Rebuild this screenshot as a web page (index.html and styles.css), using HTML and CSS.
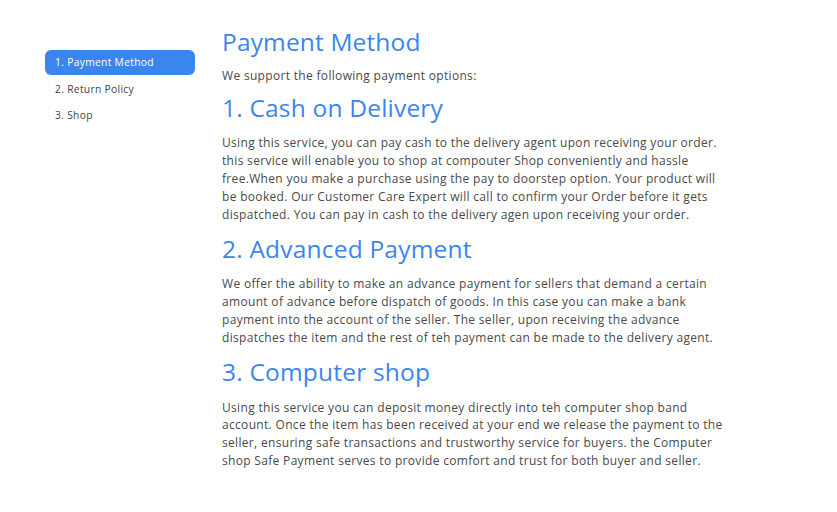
FILE: index.html
```html
<!DOCTYPE html>
<html>
<head>
<meta charset="utf-8">
<link rel="stylesheet" href="styles.css">
</head>
<body>
<div class="page">
  <nav class="sidebar">
    <a class="nav-item active">1. Payment Method</a>
    <a class="nav-item">2. Return Policy</a>
    <a class="nav-item">3. Shop</a>
  </nav>
  <main class="content">
    <h1 class="title">Payment Method</h1>
    <p class="text intro">We support the following payment options:</p>
    <h2 class="heading">1. Cash on Delivery</h2>
    <p class="text">Using this service, you can pay cash to the delivery agent upon receiving your order. this service will enable you to shop at compouter Shop conveniently and hassle free.When you make a purchase using the pay to doorstep option. Your product will be booked. Our Customer Care Expert will call to confirm your Order before it gets dispatched. You can pay in cash to the delivery agen upon receiving your order.</p>
    <h2 class="heading">2. Advanced Payment</h2>
    <p class="text">We offer the ability to make an advance payment for sellers that demand a certain amount of advance before dispatch of goods. In this case you can make a bank payment into the account of the seller. The seller, upon receiving the advance dispatches the item and the rest of teh payment can be made to the delivery agent.</p>
    <h2 class="heading">3. Computer shop</h2>
    <p class="text">Using this service you can deposit money directly into teh computer shop band account. Once the item has been received at your end we release the payment to the seller, ensuring safe transactions and trustworthy service for buyers. the Computer shop Safe Payment serves to provide comfort and trust for both buyer and seller.</p>
  </main>
</div>
</body>
</html>
```

FILE: styles.css
```css
* { box-sizing: border-box; }
body {
  margin: 0;
  background: #fff;
  font-family: "Open Sans", "Noto Sans", sans-serif;
  color: #4a4a4a;
}
.page {
  display: flex;
  padding: 26px 0 0 45px;
  gap: 27px;
}
.sidebar {
  width: 150px;
  flex: none;
  display: flex;
  flex-direction: column;
  gap: 1.5px;
  padding-top: 24px;
}
.nav-item {
  display: block;
  height: 25px;
  line-height: 25px;
  padding: 0 10px;
  font-size: 10.3px;
  letter-spacing: 0.3px;
  color: #444;
  border-radius: 6px;
}
.active {
  background: #3b86ee;
  color: #fff;
}
.content {
  width: 508px;
}
.title {
  margin: 0 0 9px;
  font-size: 24.5px;
  font-weight: 400;
  line-height: 32px;
  letter-spacing: 0.15px;
  color: #3b86ee;
}
.heading {
  margin: 0 0 10.5px;
  font-size: 24.5px;
  font-weight: 400;
  line-height: 32px;
  letter-spacing: 0.2px;
  color: #3b86ee;
}
.text {
  margin: 0 0 9px;
  font-size: 12px;
  line-height: 17.9px;
  letter-spacing: 0.32px;
  color: #4a4a4a;
}
.intro {
  margin-bottom: 7px;
}
```
